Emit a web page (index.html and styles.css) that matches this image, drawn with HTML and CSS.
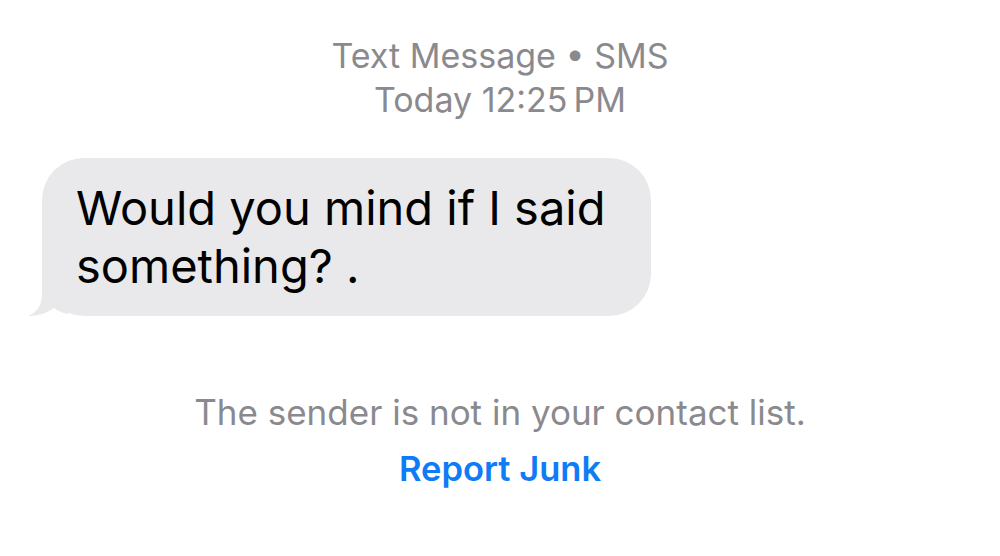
FILE: index.html
```html
<!DOCTYPE html>
<html lang="en">
<head>
<meta charset="utf-8">
<link rel="stylesheet" href="styles.css">
</head>
<body>
<main class="thread">
  <header class="meta">
    <div class="meta-line">Text Message • SMS</div>
    <div class="meta-line">Today 12:25&#8201;PM</div>
  </header>
  <div class="row">
    <div class="bubble">
      <p class="bubble-text">Would you mind if I said something? .</p>
      <svg class="tail" width="40" height="52" viewBox="0 0 40 52" aria-hidden="true">
        <path d="M14 0 L14 30 C14 42 8 49 0 52 C8 52 18 50 26 44 C30 47 34 49 40 50 L40 0 Z" fill="#e9e9eb"/>
      </svg>
    </div>
  </div>
  <div class="notice">
    <div class="notice-text">The sender is not in your contact list.</div>
    <a class="report" href="#">Report Junk</a>
  </div>
</main>
</body>
</html>
```

FILE: styles.css
```css
html, body {
  margin: 0;
  padding: 0;
  background: #ffffff;
}
body {
  font-family: Inter, "Noto Sans", "Liberation Sans", sans-serif;
  width: 1000px;
  height: 556px;
  overflow: hidden;
}
.thread {
  display: flex;
  flex-direction: column;
}
.meta {
  padding-top: 34px;
  display: flex;
  flex-direction: column;
  align-items: center;
  color: #8a8a8e;
  font-size: 34px;
  line-height: 44px;
}
.row {
  display: flex;
  padding-left: 42px;
  margin-top: 36px;
}
.bubble {
  position: relative;
  width: 609px;
  height: 158px;
  box-sizing: border-box;
  background: #e9e9eb;
  border-radius: 42px;
  padding: 21px 30px 0 34px;
}
.bubble-text {
  margin: 0;
  color: #000;
  font-size: 47px;
  line-height: 58px;
}
.tail {
  position: absolute;
  left: -14px;
  bottom: 0;
}
.notice {
  display: flex;
  flex-direction: column;
  align-items: center;
  margin-top: 74px;
}
.notice-text {
  color: #8a8a8e;
  font-size: 35px;
  line-height: 44px;
}
.report {
  margin-top: 13px;
  color: #0f7bf5;
  font-weight: 600;
  font-size: 34.5px;
  line-height: 44px;
  text-decoration: none;
}
```
